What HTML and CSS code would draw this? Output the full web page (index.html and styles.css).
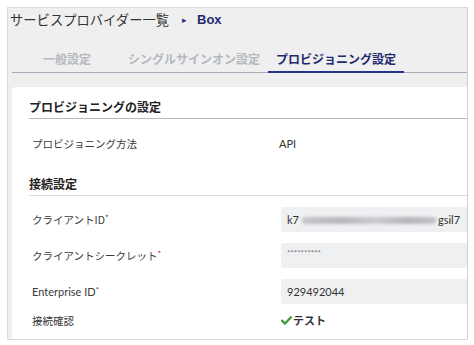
FILE: index.html
```html
<!DOCTYPE html>
<html lang="ja">
<head>
  <meta charset="UTF-8" />
  <title>Box - プロビジョニング設定</title>
  <link rel="stylesheet" href="styles.css">
</head>
<body>
  <div class="frame">
    <!-- パンくず -->
    <div class="crumb">
      <span class="crumb-parent">サービスプロバイダー一覧</span>
      <span class="crumb-arrow">&#9656;</span>
      <span class="crumb-current">Box</span>
    </div>

    <!-- タブ -->
    <div class="tabs">
      <div class="tab tab-general">一般設定</div>
      <div class="tab tab-sso">シングルサインオン設定</div>
      <div class="tab tab-prov active">プロビジョニング設定</div>
    </div>

    <div class="card">
      <h2 class="section-title first">プロビジョニングの設定</h2>
      <div class="row row-method">
        <div class="label">プロビジョニング方法</div>
        <div class="value api">API</div>
      </div>

      <h2 class="section-title">接続設定</h2>
      <div class="rows">
        <div class="row">
          <div class="label">クライアントID<span class="req">*</span></div>
          <div class="value">
            <div class="field">k7<span class="masked"></span>gsil7</div>
          </div>
        </div>
        <div class="row">
          <div class="label">クライアントシークレット<span class="req">*</span></div>
          <div class="value">
            <div class="field secret">**********</div>
          </div>
        </div>
        <div class="row">
          <div class="label en">Enterprise ID<span class="req">*</span></div>
          <div class="value">
            <div class="field">929492044</div>
          </div>
        </div>
        <div class="row row-test">
          <div class="label">接続確認</div>
          <div class="value">
            <span class="test-link">
              <svg class="check" width="11" height="9" viewBox="0 0 11 9">
                <path d="M1 4.6 L4 7.6 L10 1.2" fill="none" stroke="#3c9a3c" stroke-width="2.2" stroke-linecap="round" stroke-linejoin="round"/>
              </svg>テスト
            </span>
          </div>
        </div>
      </div>
    </div>
  </div>
</body>
</html>
```

FILE: styles.css
```css
body {
  margin: 0;
  background: #fff;
  font-family: Lato, "Noto Sans CJK JP", sans-serif;
  color: #333;
}
.frame {
  margin: 7px 0 0 7px;
  width: 459px;
  height: 331px;
  border: 1px solid #dadada;
  border-right-color: #cfcfcf;
  background: #efefef;
  overflow: hidden;
  display: flex;
  flex-direction: column;
}
.crumb {
  height: 22px;
  display: flex;
  align-items: center;
  padding-left: 2px;
  flex-shrink: 0;
}
.crumb-parent {
  font-size: 13.3px;
  color: #333;
}
.crumb-arrow {
  font-size: 9px;
  color: #27337f;
  margin: 0 0 0 13px;
}
.crumb-current {
  font-family: "Liberation Sans", "Noto Sans CJK JP", sans-serif;
  font-weight: bold;
  font-size: 13px;
  color: #1f2a6e;
  margin-left: 10px;
}
/* タブ */
.tabs {
  display: flex;
  margin-left: 4px;
  border-bottom: 1px solid #a9aebb;
  flex-shrink: 0;
}
.tab {
  font-family: "Noto Sans CJK JP", sans-serif;
  font-weight: bold;
  font-size: 12px;
  line-height: 16px;
  color: #b4b8c1;
  padding: 21px 8px 4px;
  border-bottom: 2px solid transparent;
  margin-bottom: -1px;
}
.tab-general {
  margin-left: 23px;
}
.tab-sso {
  margin-left: 21px;
}
.tab.active {
  color: #1f2a6e;
  border-bottom-color: #26338a;
}
/* カード */
.card {
  flex: 1;
  margin: 14px 0 0 4px;
  background: #fff;
  border-radius: 4px 0 0 0;
  padding-left: 17px;
}
.section-title {
  margin: 0;
  font-family: "Noto Sans CJK JP", sans-serif;
  font-size: 12px;
  line-height: 16px;
  font-weight: bold;
  color: #222;
  padding-bottom: 3px;
  border-bottom: 1px solid #b9b9b9;
}
.section-title.first {
  margin-top: 12px;
}
.section-title + .rows {
  padding-top: 5px;
}
.row-method + .section-title {
  margin-top: 9px;
  border-bottom-color: #dcdcdc;
}
.row {
  display: flex;
  align-items: center;
  height: 36px;
}
.row-method {
  height: 48px;
}
.row-test {
  height: 22px;
}
.label {
  width: 249px;
  padding-left: 3px;
  font-family: "Noto Sans CJK JP", sans-serif;
  font-size: 10.5px;
  color: #3a3a3a;
  flex-shrink: 0;
}
.label.en {
  font-family: Lato, "Noto Sans CJK JP", sans-serif;
  font-size: 11px;
}
.req {
  color: #a3262c;
  font-size: 8px;
  vertical-align: 3px;
}
.value {
  flex: 1;
  font-size: 11px;
}
.api {
  margin-left: -2px;
}
.field {
  height: 25px;
  line-height: 25px;
  background: #eff0f2;
  border-radius: 3px 0 0 3px;
  padding-left: 6px;
  font-size: 11px;
  color: #333;
  white-space: nowrap;
  overflow: hidden;
}
/* マスクされたID部分 */
.masked {
  display: inline-block;
  width: 134px;
  height: 7px;
  margin: 0 2px 0 3px;
  vertical-align: middle;
  background: linear-gradient(90deg, #c4c6cb, #b5b7bd 30%, #c9cbd0 55%, #b3b5bb 80%, #c2c4c9);
  border-radius: 3px;
  filter: blur(1.8px);
}
.field.secret {
  font-size: 8px;
  color: #777;
  line-height: 21px;
}
.test-link {
  display: inline-flex;
  align-items: center;
  font-family: "Noto Sans CJK JP", sans-serif;
  font-weight: bold;
  font-size: 11px;
  color: #333;
  cursor: pointer;
}
.check {
  margin-right: 1px;
}
```
